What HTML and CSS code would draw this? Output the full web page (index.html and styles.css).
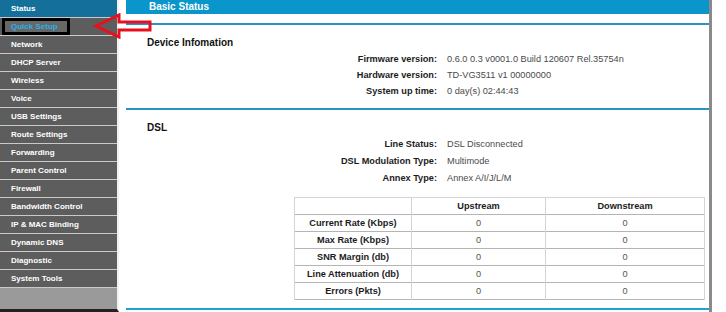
FILE: index.html
```html
<!DOCTYPE html>
<html lang="en">
<head>
    <meta charset="UTF-8">
    <meta name="viewport" content="width=device-width, initial-scale=1.0">
    <title>Basic Status</title>
    <link rel="stylesheet" href="styles.css">
</head>
<body>

<div class="page">
    <div class="sidebar">
        <ul class="nav">
            <li class="active">Status</li>
            <li class="marked"><span>Quick Setup</span></li>
            <li>Network</li>
            <li>DHCP Server</li>
            <li>Wireless</li>
            <li>Voice</li>
            <li>USB Settings</li>
            <li>Route Settings</li>
            <li>Forwarding</li>
            <li>Parent Control</li>
            <li>Firewall</li>
            <li>Bandwidth Control</li>
            <li>IP &amp; MAC Binding</li>
            <li>Dynamic DNS</li>
            <li>Diagnostic</li>
            <li>System Tools</li>
        </ul>
        <!-- red annotation arrow -->
        <svg class="arrow" width="60" height="26" viewBox="0 0 60 26">
            <path d="M3 13 L26 2 L26 9 L57 9 L57 17 L26 17 L26 24 Z" fill="none" stroke="#e8101e" stroke-width="3" stroke-linejoin="miter"/>
        </svg>
    </div>

    <div class="content">
        <div class="title-bar">Basic Status</div>
        <div class="rule"></div>

        <h3>Device Infomation</h3>
        <div class="info info-device">
            <span class="label">Firmware version:</span>
            <span class="value">0.6.0 0.3 v0001.0 Build 120607 Rel.35754n</span>
            <span class="label">Hardware version:</span>
            <span class="value">TD-VG3511 v1 00000000</span>
            <span class="label">System up time:</span>
            <span class="value">0 day(s) 02:44:43</span>
        </div>
        <div class="rule rule-thick"></div>

        <h3>DSL</h3>
        <div class="info info-dsl">
            <span class="label">Line Status:</span>
            <span class="value">DSL Disconnected</span>
            <span class="label">DSL Modulation Type:</span>
            <span class="value">Multimode</span>
            <span class="label">Annex Type:</span>
            <span class="value">Annex A/I/J/L/M</span>
        </div>

        <table class="stats">
            <thead>
                <tr>
                    <th></th>
                    <th>Upstream</th>
                    <th>Downstream</th>
                </tr>
            </thead>
            <tbody>
                <tr><th>Current Rate (Kbps)</th><td>0</td><td>0</td></tr>
                <tr><th>Max Rate (Kbps)</th><td>0</td><td>0</td></tr>
                <tr><th>SNR Margin (db)</th><td>0</td><td>0</td></tr>
                <tr><th>Line Attenuation (db)</th><td>0</td><td>0</td></tr>
                <tr><th>Errors (Pkts)</th><td>0</td><td>0</td></tr>
            </tbody>
        </table>

        <div class="rule rule-bottom"></div>
    </div>
</div>

</body>
</html>
```

FILE: styles.css
```css
body {
    margin: 0;
    font-family: "Liberation Sans", Arial, sans-serif;
    background-color: #fff;
}
.page {
    display: flex;
    height: 312px;
    width: 712px;
}
.sidebar {
    position: relative;
    width: 119px;
    background-color: #9a9a9a;
    border-right: 2px solid #f2f2f2;
    border-bottom: 3px solid #222;
    box-sizing: border-box;
}
.nav {
    list-style: none;
    margin: 0;
    padding: 0;
}
.nav li {
    height: 17px;
    line-height: 17px;
    padding-left: 11px;
    background-color: #5d5d5d;
    border-bottom: 1px solid #c9c9c9;
    color: #fff;
    font-size: 8px;
    font-weight: bold;
}
.nav li.active {
    background-color: #146f9b;
}
.nav li.marked span {
    display: inline-block;
    height: 11px;
    line-height: 11px;
    margin-left: -9px;
    padding: 0 9px 0 6px;
    border: 3px solid #000;
    background-color: #676767;
    color: #25b2e8;
}
.arrow {
    position: absolute;
    left: 93px;
    top: 13px;
}
.content {
    flex: 1;
    margin-left: 7px;
    border-right: 3px solid #8a8a8a;
}
.title-bar {
    height: 14px;
    line-height: 13px;
    padding-left: 23px;
    background-color: #0a96ca;
    color: #fff;
    font-size: 10px;
    font-weight: bold;
}
.rule {
    height: 2px;
    margin-top: 9px;
    background-color: #2a93c4;
}
.rule-thick {
    margin-top: 9px;
}
.rule-bottom {
    margin-top: 8px;
    background-color: #1aa3d8;
}
h3 {
    margin: 11px 0 1px 21px;
    height: 14px;
    line-height: 14px;
    font-size: 10px;
    color: #111;
}
.info {
    display: grid;
    grid-template-columns: 311px 1fr;
    column-gap: 10px;
    font-size: 9.2px;
}
.info-device {
    grid-auto-rows: 16px;
    line-height: 16px;
}
.info-dsl {
    grid-auto-rows: 17px;
    line-height: 17px;
}
.label {
    text-align: right;
    font-weight: bold;
    color: #1c1c1c;
}
.value {
    color: #4a4a4a;
}
.stats {
    margin: 10px 0 0 168px;
    width: 411px;
    border-collapse: collapse;
    font-size: 9.2px;
    border: 1px solid #d4d4d4;
}
.stats th, .stats td {
    height: 16px;
    padding: 0;
    text-align: center;
    border-left: 1px solid #d4d4d4;
    border-right: 1px solid #d4d4d4;
}
.stats tr {
    border-bottom: 1px solid #b4b4b4;
}
.stats th {
    color: #1c1c1c;
}
.stats td {
    color: #555;
}
.stats tr > :nth-child(1) { width: 116px; }
.stats tr > :nth-child(2) { width: 133px; }
```
